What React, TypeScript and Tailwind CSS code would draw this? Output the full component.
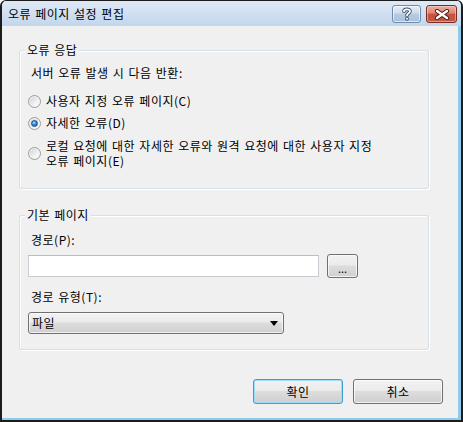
import React from "react";

const btnGrad =
  "bg-[linear-gradient(#f2f2f2_0%,#ebebeb_45%,#dddddd_50%,#cfcfcf_100%)]";

function Radio({ checked }: { checked?: boolean }) {
  return (
    <span className="w-[13px] h-[13px] shrink-0 rounded-full border border-[#9c9c9c] bg-[linear-gradient(135deg,#cfcfcf,#f6f6f6_70%,#ffffff)] shadow-[inset_0_0_0_1px_#f3f3f3] flex items-center justify-center">
      {checked && (
        <span className="w-[7px] h-[7px] rounded-full border border-[#1b4f86] bg-[radial-gradient(circle_at_40%_35%,#a8e4ff_0%,#2a8ee0_45%,#0d4f9c_100%)]" />
      )}
    </span>
  );
}

function Group({
  label,
  h,
  children,
}: {
  label: string;
  h: string;
  children: React.ReactNode;
}) {
  return (
    <div
      className={`relative w-[410px] ${h} rounded-[3px] border border-[#d5dfe5] shadow-[1px_1px_0_#ffffff,inset_1px_1px_0_#ffffff]`}
    >
      <span className="absolute left-[5px] top-[-9px] px-[2px] bg-[#f0f0f0] leading-[16px] text-black">
        {label}
      </span>
      {children}
    </div>
  );
}

export default function App() {
  return (
    <div className="w-[463px] h-[422px] flex flex-col bg-[#8ccbe9] border-[#1c1c1c] border-t border-l-2 border-r-2 border-b-2 rounded-t-[6px] overflow-hidden text-[12px] leading-[16px] text-black font-['Noto_Sans_CJK_KR','Noto_Sans',sans-serif] tracking-[0.5px] [word-spacing:1px]">
      {/* title bar */}
      <div className="h-[25px] shrink-0 flex justify-between bg-[linear-gradient(#dfe9f5,#c2d6ec)]">
        <div className="pl-[6px] pt-[5px] text-black">오류 페이지 설정 편집</div>
        <div className="flex gap-[5px] pt-[4px] pr-[4px]">
          <div className="w-[29px] h-[18px] rounded-[3px] border border-[#6f8cb0] bg-[linear-gradient(#e6eef7_0%,#cddbeb_45%,#b7cbe2_50%,#a9c1dc_100%)] shadow-[inset_0_0_0_1px_rgba(255,255,255,0.6)] flex items-center justify-center">
            <svg width="12" height="14" viewBox="0 0 12 14">
              <path
                d="M3 4.2 C3 1.8 9 1.5 9 4.2 C9 6.2 6 6.4 6 8.6"
                fill="none"
                stroke="#3d4f66"
                strokeWidth="3.6"
                strokeLinecap="round"
              />
              <circle cx="6" cy="11.8" r="1.9" fill="#3d4f66" />
              <path
                d="M3 4.2 C3 1.8 9 1.5 9 4.2 C9 6.2 6 6.4 6 8.6"
                fill="none"
                stroke="#ffffff"
                strokeWidth="1.8"
                strokeLinecap="round"
              />
              <circle cx="6" cy="11.8" r="1" fill="#ffffff" />
            </svg>
          </div>
          <div className="w-[31px] h-[18px] rounded-[3px] border border-[#7b2c22] bg-[linear-gradient(#eab0a2_0%,#dc8574_45%,#c9513f_50%,#c05a44_100%)] shadow-[inset_0_0_0_1px_rgba(255,220,210,0.5)] flex items-center justify-center">
            <svg width="16" height="11" viewBox="0 0 16 11">
              <path
                d="M3 2 L13 9 M13 2 L3 9"
                stroke="#4a1812"
                strokeWidth="4.2"
                strokeLinecap="round"
              />
              <path
                d="M3 2 L13 9 M13 2 L3 9"
                stroke="#ffffff"
                strokeWidth="2.4"
                strokeLinecap="round"
              />
            </svg>
          </div>
        </div>
      </div>

      {/* client area */}
      <div className="flex-1 mr-[3px] mb-[2px] bg-[#f0f0f0] flex flex-col pl-[17px]">
        <div className="mt-[24px]">
          <Group label="오류 응답" h="h-[139px]">
            <div className="flex flex-col pl-[8px] pt-[14px]">
              <div className="pl-[3px]">서버 오류 발생 시 다음 반환:</div>
              <div className="mt-[12px] flex items-center gap-[5px]">
                <Radio />
                <span>사용자 지정 오류 페이지(C)</span>
              </div>
              <div className="mt-[6px] flex items-center gap-[5px]">
                <Radio checked />
                <span>자세한 오류(D)</span>
              </div>
              <div className="mt-[7px] flex items-center gap-[5px]">
                <Radio />
                <div className="flex flex-col">
                  <span className="leading-[15px]">
                    로컬 요청에 대한 자세한 오류와 원격 요청에 대한 사용자 지정
                  </span>
                  <span className="leading-[15px]">오류 페이지(E)</span>
                </div>
              </div>
            </div>
          </Group>
        </div>

        <div className="mt-[26px]">
          <Group label="기본 페이지" h="h-[135px]">
            <div className="flex flex-col pl-[8px] pt-[16px]">
              <div className="pl-[3px]">경로(P):</div>
              <div className="mt-[6px] h-[24px] flex items-center">
                <div className="w-[291px] h-[22px] bg-white border border-[#c9cdd3] border-t-[#b9bec6]" />
                <div
                  className={`ml-[8px] w-[31px] h-[24px] rounded-[3px] border border-[#707070] ${btnGrad} shadow-[inset_0_0_0_1px_rgba(255,255,255,0.7)] flex items-end justify-center pb-[3px] text-[11px] leading-[12px] tracking-normal [word-spacing:0]`}
                >
                  ...
                </div>
              </div>
              <div className="mt-[11px] pl-[3px]">경로 유형(T):</div>
              <div
                className={`mt-[7px] w-[256px] h-[22px] rounded-[3px] border border-[#707070] ${btnGrad} shadow-[inset_0_0_0_1px_rgba(255,255,255,0.7)] flex items-center justify-between pl-[3px] pr-[5px]`}
              >
                <span>파일</span>
                <svg width="8" height="5" viewBox="0 0 8 5">
                  <path d="M0 0 H8 L4 5 Z" fill="#000" />
                </svg>
              </div>
            </div>
          </Group>
        </div>

        <div className="mt-[29px] flex justify-end gap-[10px] pr-[15px]">
          <div
            className={`w-[90px] h-[25px] rounded-[3px] border border-[#3b9fd6] ${btnGrad} shadow-[inset_0_0_0_1px_#9fdcf7] flex items-center justify-center`}
          >
            확인
          </div>
          <div
            className={`w-[90px] h-[25px] rounded-[3px] border border-[#707070] ${btnGrad} shadow-[inset_0_0_0_1px_rgba(255,255,255,0.7)] flex items-center justify-center`}
          >
            취소
          </div>
        </div>
      </div>
    </div>
  );
}
